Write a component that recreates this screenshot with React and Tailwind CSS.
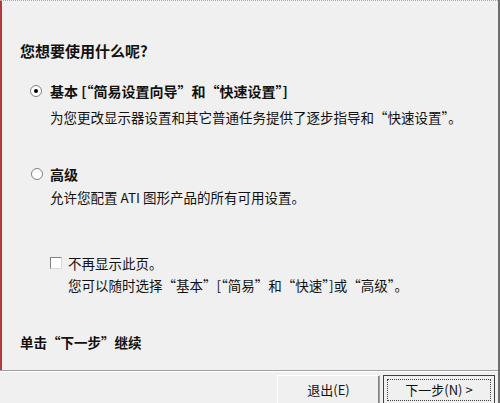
/*
  App.jsx
  ATI 显示设置向导 — 选择基本或高级模式的页面。
*/

const font = { fontFamily: '"Noto Sans CJK SC", "Noto Sans", sans-serif' }

function Radio({ checked }) {
    return (
        <span className="w-[12px] h-[12px] rounded-full border border-[#808080] bg-white flex items-center justify-center shrink-0">
            {checked && <span className="w-[4px] h-[4px] rounded-full bg-black" />}
        </span>
    )
}

function Checkbox() {
    return <span className="w-[12px] h-[12px] border border-[#808080] border-r-[#d8d8d8] border-b-[#d8d8d8] bg-white shrink-0" />
}

function App() {
    return (
        <div
            className="w-[500px] h-[403px] bg-[#f0f0f0] overflow-hidden text-[#111] text-[13.5px] border-r-2 border-r-[#6e6e6e]"
            style={font}>
            <div className="border-t border-dotted border-t-[#a8a8a8]" />
            <div className="h-[369px] border-l-[2px] border-l-[#b33a3a] flex flex-col">
                <p className="mt-[41px] ml-[18px] h-[18px] leading-[18px] font-bold text-[15px]">您想要使用什么呢?</p>

                <div className="mt-[22px] ml-[28px] h-[18px] flex items-center gap-[8px]">
                    <Radio checked />
                    <span className="font-bold text-[14px] leading-[18px]">基本 [“简易设置向导”和“快速设置”]</span>
                </div>
                <p className="mt-[8px] ml-[48px] h-[18px] leading-[18px]">为您更改显示器设置和其它普通任务提供了逐步指导和“快速设置”。</p>

                <div className="mt-[39px] ml-[29px] h-[18px] flex items-center gap-[7px]">
                    <Radio />
                    <span className="font-bold text-[14px] leading-[18px]">高级</span>
                </div>
                <p className="mt-[5px] ml-[48px] h-[18px] leading-[18px]">允许您配置 ATI 图形产品的所有可用设置。</p>

                <div className="mt-[48px] ml-[48px] h-[18px] flex items-center gap-[6px]">
                    <Checkbox />
                    <span className="leading-[18px]">不再显示此页。</span>
                </div>
                <p className="mt-[4px] ml-[66px] h-[18px] leading-[18px]">您可以随时选择“基本”[“简易”和“快速”]或“高级”。</p>

                <p className="mt-[39px] ml-[18px] h-[18px] leading-[18px] font-bold">单击“下一步”继续</p>
            </div>

            <div className="border-t border-t-[#a0a0a0] border-b border-b-white" />

            <div className="flex justify-end gap-[3px] pt-[3px] pr-[3px]">
                <button className="w-[103px] h-[30px] bg-[#f0f0f0] border border-[#a0a0a0] border-t-white border-l-white shadow-[inset_-1px_-1px_0_#808080] text-[13px]">
                    退出(E)
                </button>
                <button className="w-[112px] h-[30px] bg-[#f0f0f0] border border-[#404040] p-[3px]">
                    <span className="w-full h-full flex items-center justify-center border border-dotted border-[#404040] text-[13px]">
                        下一步(N) &gt;
                    </span>
                </button>
            </div>
        </div>
    )
}

export default App
